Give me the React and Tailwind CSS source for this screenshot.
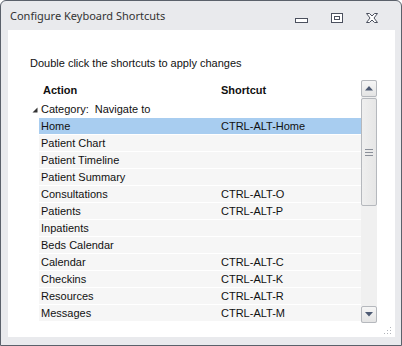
import React from 'react';

const rows = [
  { action: 'Home', shortcut: 'CTRL-ALT-Home', selected: true },
  { action: 'Patient Chart', shortcut: '' },
  { action: 'Patient Timeline', shortcut: '' },
  { action: 'Patient Summary', shortcut: '' },
  { action: 'Consultations', shortcut: 'CTRL-ALT-O' },
  { action: 'Patients', shortcut: 'CTRL-ALT-P' },
  { action: 'Inpatients', shortcut: '' },
  { action: 'Beds Calendar', shortcut: '' },
  { action: 'Calendar', shortcut: 'CTRL-ALT-C' },
  { action: 'Checkins', shortcut: 'CTRL-ALT-K' },
  { action: 'Resources', shortcut: 'CTRL-ALT-R' },
  { action: 'Messages', shortcut: 'CTRL-ALT-M' },
];

const TitleButtons = () => (
  <div className="flex items-start h-full">
    {/* Minimize */}
    <svg width="13" height="5" className="mt-[17px] mr-[23px]">
      <rect x="0.5" y="0.5" width="12" height="4" fill="#fff" stroke="#4b505e" />
    </svg>
    {/* Maximize */}
    <svg width="12" height="10" className="mt-[12px] mr-[23px]">
      <rect x="0.5" y="0.5" width="11" height="9" fill="#fff" stroke="#4b505e" />
      <rect x="3.5" y="3.5" width="5" height="3" fill="#fff" stroke="#4b505e" />
    </svg>
    {/* Close */}
    <svg width="12" height="10" className="mt-[12px] mr-[23px]">
      <path
        d="M0.5 0.5 H3.5 L6 3 L8.5 0.5 H11.5 L8 5 L11.5 9.5 H8.5 L6 7 L3.5 9.5 H0.5 L4 5 Z"
        fill="#fff"
        stroke="#4b505e"
        strokeLinejoin="round"
      />
    </svg>
  </div>
);

const ScrollButton = ({ down }) => (
  <div className="h-[17px] w-[16px] border border-[#b5b8bd] rounded-[2px] bg-gradient-to-b from-[#f6f6f6] to-[#e4e4e4] flex items-center justify-center">
    <svg width="8" height="5">
      {down ? (
        <path d="M0 0 H8 L4 4.5 Z" fill="#4d5a73" />
      ) : (
        <path d="M0 4.5 H8 L4 0 Z" fill="#4d5a73" />
      )}
    </svg>
  </div>
);

const Scrollbar = () => (
  <div className="w-[16px] bg-[#f0f0f0] flex flex-col">
    <ScrollButton />
    <div className="h-[108px] mt-[1px] border border-[#b5b8bd] rounded-[2px] bg-gradient-to-r from-[#efefef] to-[#e6e6e6] flex flex-col items-center justify-center gap-[2px]">
      <div className="w-[8px] h-[1px] bg-[#8a8f99]" />
      <div className="w-[8px] h-[1px] bg-[#8a8f99]" />
      <div className="w-[8px] h-[1px] bg-[#8a8f99]" />
    </div>
    <div className="flex-1" />
    <ScrollButton down />
  </div>
);

const App = () => {
  return (
    <div className="w-[402px] h-[346px] bg-white">
      <div className="w-[402px] h-[346px] border border-[#5b616b] rounded-t-[6px] bg-[#e9eaed] flex flex-col font-['Liberation_Sans',Arial,sans-serif] text-[11px] text-[#111]">
        {/* Title bar */}
        <div className="h-[29px] flex justify-between">
          <div className="pl-[9px] pt-[7px] font-['Noto_Sans',sans-serif] text-[11px] text-[#333]">
            Configure Keyboard Shortcuts
          </div>
          <TitleButtons />
        </div>

        {/* Client area */}
        <div className="flex-1 ml-[7px] mr-[6px] bg-white flex flex-col">
          <div className="pl-[22px] pt-[25px] h-[50px]">Double click the shortcuts to apply changes</div>

          <div className="ml-[22px] w-[347px] h-[243px] flex">
            <div className="flex-1 flex flex-col">
              {/* Header */}
              <div className="h-[21px] flex items-center pl-[13px] font-bold">
                <div className="w-[178px]">Action</div>
                <div>Shortcut</div>
              </div>
              {/* Category */}
              <div className="h-[17px] flex items-center pl-[2px]">
                <svg width="6" height="6" className="mr-[3px]">
                  <path d="M5.5 0.5 V5.5 H0.5 Z" fill="#333" />
                </svg>
                <span>Category:</span>
                <span className="ml-[6px]">Navigate to</span>
              </div>
              {/* Rows */}
              <div className="pl-[9px] flex flex-col">
                {rows.map((r) => (
                  <div
                    key={r.action}
                    className={`h-[17px] flex items-center border-b border-white ${
                      r.selected ? 'bg-[#a8cdf0]' : 'bg-[#f6f6f6]'
                    }`}
                  >
                    <div className="w-[182px] pl-[2px]">{r.action}</div>
                    <div>{r.shortcut}</div>
                  </div>
                ))}
              </div>
            </div>
            <Scrollbar />
          </div>
        </div>

        {/* Bottom frame with grip */}
        <div className="h-[8px] relative">
          <svg width="8" height="8" className="absolute right-[9px] -top-[10px]">
            <rect x="6" y="0" width="1" height="1" fill="#b0b4ba" />
            <rect x="3" y="3" width="1" height="1" fill="#b0b4ba" />
            <rect x="6" y="3" width="1" height="1" fill="#b0b4ba" />
            <rect x="0" y="6" width="1" height="1" fill="#b0b4ba" />
            <rect x="3" y="6" width="1" height="1" fill="#b0b4ba" />
            <rect x="6" y="6" width="1" height="1" fill="#b0b4ba" />
          </svg>
        </div>
      </div>
    </div>
  );
};

export default App;
